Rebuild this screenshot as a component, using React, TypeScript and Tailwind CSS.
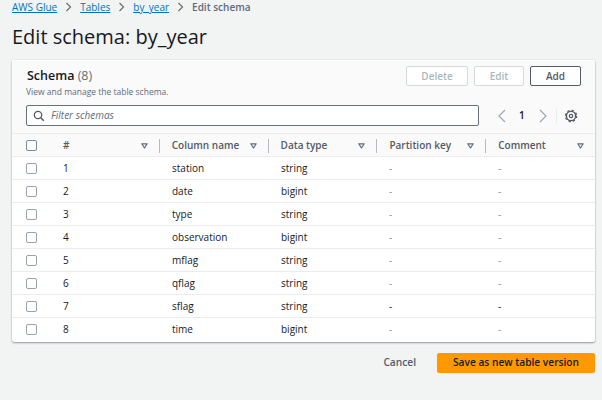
import React from "react";

const rows = [
  ["1", "station", "string"],
  ["2", "date", "bigint"],
  ["3", "type", "string"],
  ["4", "observation", "bigint"],
  ["5", "mflag", "string"],
  ["6", "qflag", "string"],
  ["7", "sflag", "string"],
  ["8", "time", "bigint"],
];

function Sort() {
  return (
    <svg width="7" height="6" viewBox="0 0 7 6" className="shrink-0">
      <path d="M0.8 0.8h5.4L3.5 5z" fill="none" stroke="#5f6b7a" strokeWidth="1.2" strokeLinejoin="round" />
    </svg>
  );
}

function Check({ dark }: { dark?: boolean }) {
  return <div className={`w-[11px] h-[11px] rounded-[2px] border bg-white ${dark ? "border-[#7d8998]" : "border-[#9aa1a8]"}`} />;
}

function HeadCell({ label, sep = true, w }: { label: string; sep?: boolean; w: string }) {
  return (
    <div className={`flex items-center h-full ${w}`}>
      <div className="flex items-center justify-between flex-1 pr-[11px]">
        <span>{label}</span>
        <Sort />
      </div>
      {sep && <div className="w-px h-[14px] bg-[#b4bac0]" />}
    </div>
  );
}

function Chevron() {
  return (
    <svg width="7" height="10" viewBox="0 0 7 10" className="mx-[8px]">
      <path d="M1.5 1l4 4-4 4" fill="none" stroke="#687078" strokeWidth="1.2" />
    </svg>
  );
}

export default function App() {
  return (
    <div className="w-[602px] h-[400px] overflow-hidden bg-[#f2f3f3] text-[#16191f] [font-family:'Open_Sans',sans-serif]">
      <nav className="flex items-center h-[14px] pl-[12px] text-[10px] leading-[14px]">
        <span className="text-[#0073bb] underline">AWS Glue</span>
        <Chevron />
        <span className="text-[#0073bb] underline">Tables</span>
        <Chevron />
        <span className="text-[#0073bb] underline">by_year</span>
        <Chevron />
        <span className="font-semibold text-[#5f6b7a]">Edit schema</span>
      </nav>

      <h1 className="pl-[12px] mt-[9px] text-[20px] leading-[28px] font-normal">Edit schema: by_year</h1>

      <section className="mx-[12px] mt-[9px] w-[583px] h-[282px] bg-white rounded-[2px] shadow-[0_1px_2px_rgba(0,28,36,0.4),0_0_1px_rgba(0,28,36,0.2)]">
        <div className="h-[73px] bg-[#fafafa] px-[14px] pt-[7px]">
          <div className="flex items-start justify-between">
            <div>
              <div className="pl-[1px] text-[12.5px] leading-[18px] font-semibold">
                Schema <span className="font-normal text-[#687078]">(8)</span>
              </div>
              <p className="text-[8.5px] leading-[12px] text-[#5f6b7a] mt-[1px]">View and manage the table schema.</p>
            </div>
            <div className="flex gap-[6px] text-[10px] font-semibold mt-[-1px]">
              <button className="w-[62px] h-[20px] border border-[#d5dbdb] rounded-[2px] bg-white text-[#aab7b8]">Delete</button>
              <button className="w-[50px] h-[20px] border border-[#d5dbdb] rounded-[2px] bg-white text-[#aab7b8]">Edit</button>
              <button className="w-[51px] h-[20px] border border-[#545b64] rounded-[2px] bg-white text-[#545b64]">Add</button>
            </div>
          </div>
          <div className="flex items-center mt-[7px]">
            <div className="flex items-center w-[453px] h-[21px] border border-[#687078] rounded-[2px] bg-white pl-[6px] gap-[6px]">
              <svg width="12" height="12" viewBox="0 0 12 12" className="shrink-0">
                <circle cx="5" cy="5" r="3.7" fill="none" stroke="#545b64" strokeWidth="1.3" />
                <path d="M7.8 7.8l3 3" stroke="#545b64" strokeWidth="1.5" />
              </svg>
              <span className="text-[10px] italic text-[#5f6b7a]">Filter schemas</span>
            </div>
            <svg width="8" height="14" viewBox="0 0 8 14" className="ml-[19px]">
              <path d="M7 1L1 7l6 6" fill="none" stroke="#9ba7b6" strokeWidth="1.2" />
            </svg>
            <span className="ml-[13px] text-[10px] font-semibold">1</span>
            <svg width="8" height="14" viewBox="0 0 8 14" className="ml-[14px]">
              <path d="M1 1l6 6-6 6" fill="none" stroke="#9ba7b6" strokeWidth="1.2" />
            </svg>
            <div className="w-px h-[16px] bg-[#eaeded] ml-[9px]" />
            <svg width="14" height="14" viewBox="0 0 14 14" className="ml-[7px]">
              <circle cx="7" cy="7" r="4.6" fill="none" stroke="#545b64" strokeWidth="1.4" />
              <circle cx="7" cy="7" r="5.6" fill="none" stroke="#545b64" strokeWidth="1.3" strokeDasharray="2.2 2.2" />
              <circle cx="7" cy="7" r="1.7" fill="none" stroke="#545b64" strokeWidth="1.2" />
            </svg>
          </div>
        </div>

        <div className="flex items-center h-[24px] pt-[1px] bg-[#fafafa] border-y border-[#eaeded] text-[10px] font-semibold text-[#545b64]">
          <div className="w-[51px] pl-[14px] flex items-center"><Check dark /></div>
          <HeadCell label="#" w="w-[97px]" />
          <div className="w-[12px]" />
          <HeadCell label="Column name" w="w-[97px]" />
          <div className="w-[12px]" />
          <HeadCell label="Data type" w="w-[97px]" />
          <div className="w-[12px]" />
          <HeadCell label="Partition key" w="w-[97px]" />
          <div className="w-[12px]" />
          <HeadCell label="Comment" sep={false} w="w-[97px]" />
        </div>

        {rows.map(([n, name, type], i) => (
          <div
            key={n}
            className={`flex items-center h-[23px] pt-[1px] text-[10px] text-[#16191f] border-b ${i < 7 ? "border-[#eaeded]" : "border-transparent"}`}
          >
            <div className="w-[51px] pl-[14px]"><Check /></div>
            <div className="w-[109px]">{n}</div>
            <div className="w-[109px]">{name}</div>
            <div className="w-[108px]">{type}</div>
            <div className={`w-[109px] ${n === "7" ? "text-[#16191f]" : "text-[#879596]"}`}>-</div>
            <div className={n === "7" ? "text-[#16191f]" : "text-[#879596]"}>-</div>
          </div>
        ))}
      </section>

      <div className="flex items-center justify-end w-[595px] mt-[11px] text-[10.2px] font-semibold">
        <button className="text-[#545b64] mr-[21px]">Cancel</button>
        <button className="w-[158px] h-[20px] bg-[#ff9900] rounded-[2px] text-[#16191f]">Save as new table version</button>
      </div>
    </div>
  );
}
